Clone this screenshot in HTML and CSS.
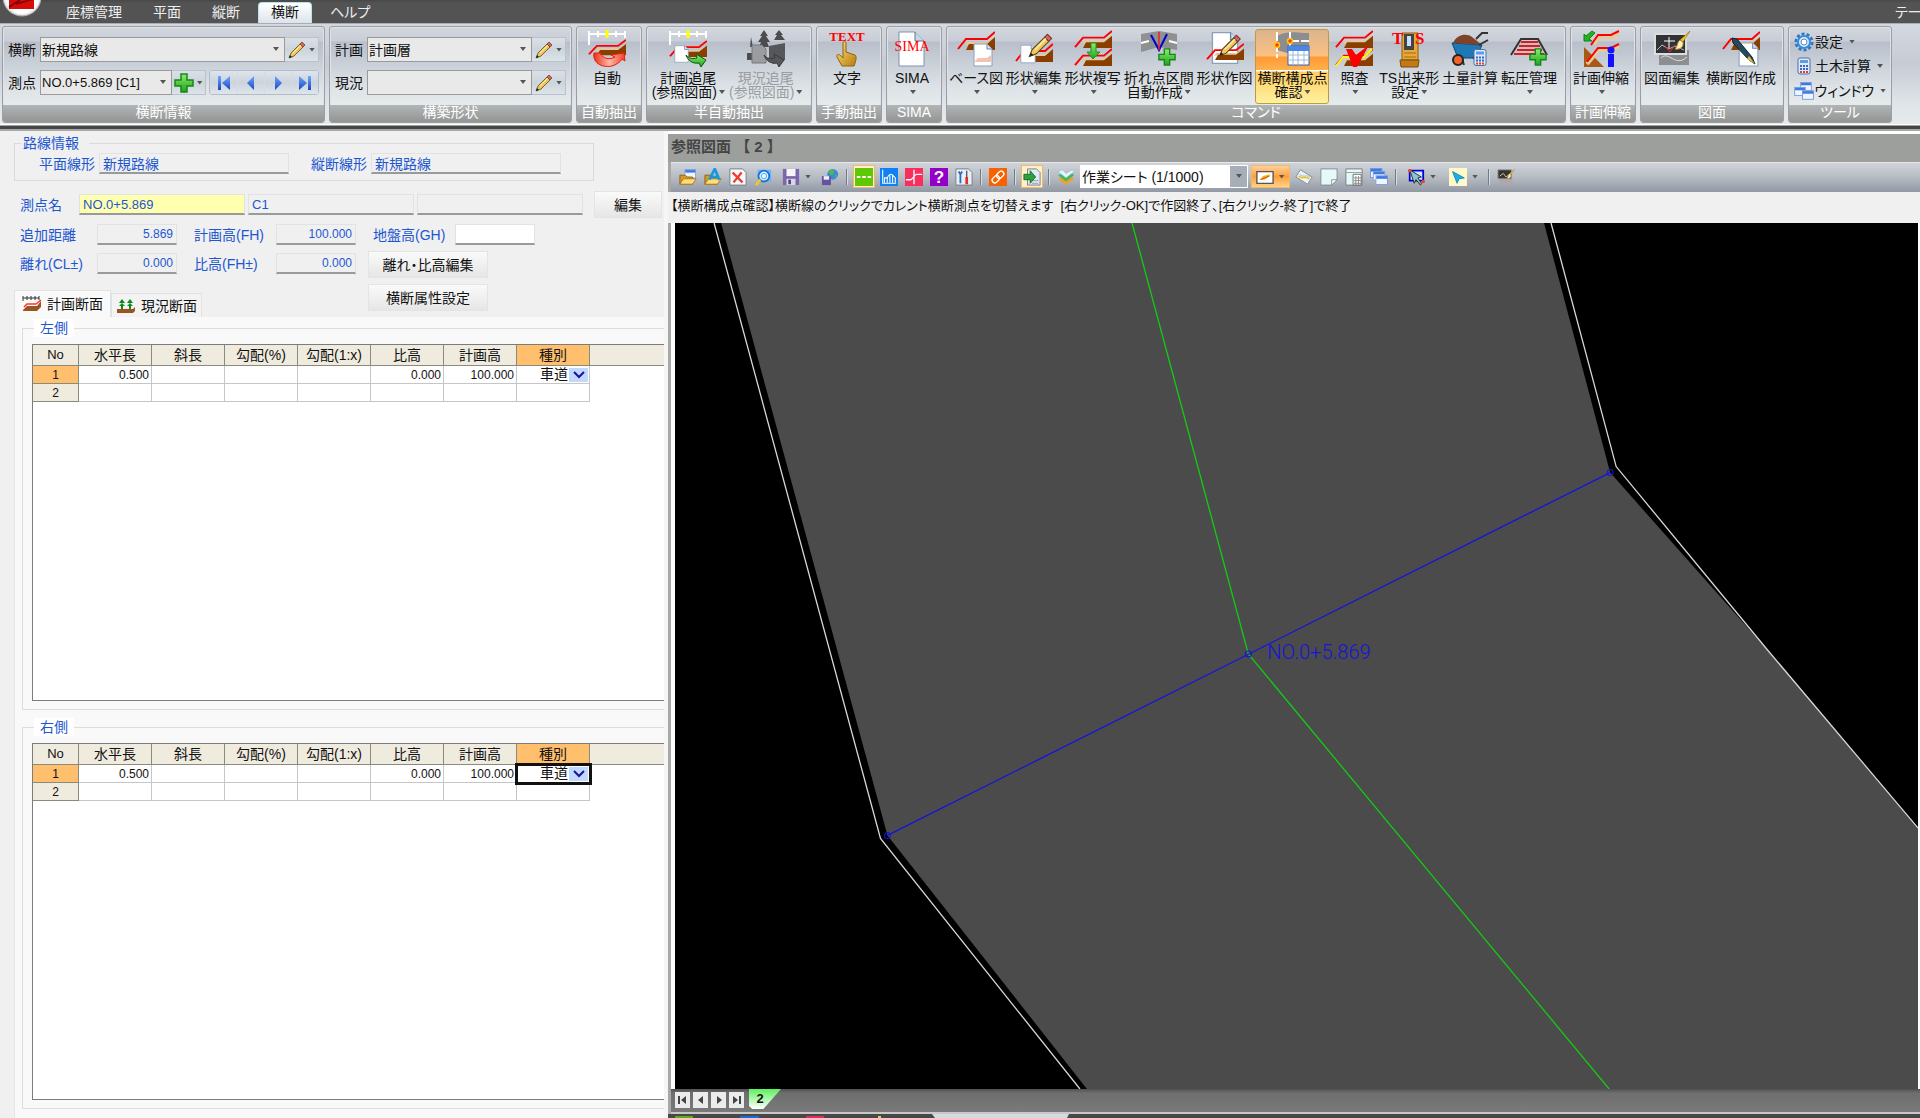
FILE: index.html
```html
<!DOCTYPE html>
<html lang="ja">
<head>
<meta charset="utf-8">
<title>横断</title>
<link rel="stylesheet" href="styles.css">
</head>
<body>
<svg class="defs" width="0" height="0" aria-hidden="true">
  <defs>
    <linearGradient id="gBlue" x1="0" y1="0" x2="0" y2="1"><stop offset="0" stop-color="#6fa8ff"/><stop offset="1" stop-color="#1646c8"/></linearGradient>
    <linearGradient id="gGreen" x1="0" y1="0" x2="0" y2="1"><stop offset="0" stop-color="#8cf06a"/><stop offset="1" stop-color="#1ea01e"/></linearGradient>
    <linearGradient id="gGold" x1="0" y1="0" x2="1" y2="1"><stop offset="0" stop-color="#ffe27a"/><stop offset="1" stop-color="#b87a10"/></linearGradient>
    <linearGradient id="gRed" x1="0" y1="0" x2="1" y2="0"><stop offset="0" stop-color="#e83018"/><stop offset=".5" stop-color="#ffb8a4"/><stop offset="1" stop-color="#f04028"/></linearGradient>
  </defs>
  <symbol id="prof" viewBox="0 0 38 20" preserveAspectRatio="none">
    <path d="M4 19 10 11H30L38 6V19H12V14H8Z" fill="#e3c99b"/>
    <path d="M9 19 12 13H30L38 6V19Z" fill="#8a3f00"/>
    <path d="M1 18 9 8H30L38 1" fill="none" stroke="#f00" stroke-width="2"/>
  </symbol>
  <symbol id="scale" viewBox="0 0 38 16">
    <path d="M1 1V15M1 4H37M10 1V7M28 1V7M37 1V8" stroke="#fff" stroke-width="2" fill="none"/>
    <path d="M19 0V8" stroke="#ff0" stroke-width="3"/>
  </symbol>
  <symbol id="page" viewBox="0 0 20 24">
    <path d="M1 1H14L19 6V23H1Z" fill="#fff" stroke="#8ba0bd"/><path d="M14 1V6H19" fill="#cfe0f2" stroke="#6f87a8"/>
  </symbol>
  <symbol id="pencil" viewBox="0 0 18 18">
    <path d="M1 17 3 12 12 3 15 6 6 15Z" fill="#f0c860" stroke="#5b4518" stroke-width=".8"/><path d="M12 3 14 1 17 4 15 6Z" fill="#d8685c" stroke="#7c3530" stroke-width=".8"/><path d="M1 17 2 14 4 16Z" fill="#222"/><path d="M5 12 13 4" stroke="#fff0b0" stroke-width="1"/>
  </symbol>
  <symbol id="plus" viewBox="0 0 20 20">
    <path d="M7 1H13V7H19V13H13V19H7V13H1V7H7Z" fill="url(#gGreen)" stroke="#17861b" stroke-width="1.5"/>
  </symbol>
  <symbol id="calc" viewBox="0 0 14 18">
    <rect x="1" y="1" width="12" height="16" rx="2" fill="#dfe9f8" stroke="#4a70a8"/><rect x="3" y="3" width="8" height="3" fill="#5e9be6"/>
    <path d="M3 9H5M6 9H8M9 9H11M3 12H5M6 12H8M9 12H11" stroke="#3568c8" stroke-width="2"/><path d="M3 15H5M6 15H8M9 15H11" stroke="#e04030" stroke-width="2"/>
  </symbol>
  <symbol id="folder" viewBox="0 0 20 20">
    <path d="M1 18V8H7L9 10H15V18Z" fill="#d49a28" stroke="#8c6210"/><path d="M1 18 5 12H19L15 18Z" fill="#ffdc7c" stroke="#a87818"/>
  </symbol>
  <symbol id="win" viewBox="0 0 14 11">
    <rect x=".5" y=".5" width="13" height="10" fill="#eef5ff" stroke="#6f95dc"/><rect x="1" y="1" width="12" height="3" fill="#3f78e0"/>
  </symbol>
  <symbol id="brush" viewBox="0 0 16 20">
    <path d="M15 0 8 11 5 9Z" fill="#f4c822" stroke="#8a6812" stroke-width=".6"/><path d="M8 11 5 9C2 11 3 15 0 18 5 19 9 16 8 11Z" fill="#fff2b8" stroke="#b08430"/>
  </symbol>
</svg>

<header class="menubar">
  <svg class="logo" width="44" height="23" viewBox="0 0 44 23"><circle cx="22" cy="-3" r="19" fill="#e8e8e8" stroke="#aaa"/><circle cx="22" cy="-3" r="17" fill="#fff"/><path d="M9 0H34V9H9Z" fill="#d80b0b"/><path d="M9 7 20 0M16 4 34 -1" stroke="#7c0000" stroke-width="1.5"/></svg>
  <nav class="menus">
    <button>座標管理</button><button>平面</button><button>縦断</button><button class="current">横断</button><button>ヘルプ</button>
  </nav>
  <button class="theme">テーマ</button>
</header>

<div class="ribbon">
  <section class="panel panel-info">
    <div class="fields">
      <div class="line"><label for="route">横断</label><span class="combo grow"><select id="route"><option>新規路線</option></select></span><button class="mini" aria-label="編集"><svg width="18" height="18"><use href="#pencil"/></svg><i class="caret"></i></button></div>
      <div class="line"><label for="station">測点</label><span class="combo combo-station"><select id="station"><option>NO.0+5.869 [C1]</option></select></span><button class="mini" aria-label="追加"><svg width="20" height="20"><use href="#plus"/></svg><i class="caret"></i></button>
        <div class="steps">
          <button aria-label="先頭"><svg width="14" height="16"><path d="M1 1H4V15H1ZM13 1V15L5 8Z" fill="url(#gBlue)"/></svg></button>
          <button aria-label="前へ"><svg width="14" height="16"><path d="M10 1V15L3 8Z" fill="url(#gBlue)"/></svg></button>
          <button aria-label="次へ"><svg width="14" height="16"><path d="M4 1V15L11 8Z" fill="url(#gBlue)"/></svg></button>
          <button aria-label="最後"><svg width="14" height="16"><path d="M10 1H13V15H10ZM1 1V15L9 8Z" fill="url(#gBlue)"/></svg></button>
        </div>
      </div>
    </div>
    <h2>横断情報</h2>
  </section>

  <section class="panel panel-shape">
    <div class="fields">
      <div class="line"><label for="plan">計画</label><span class="combo grow"><select id="plan"><option>計画層</option></select></span><button class="mini" aria-label="計画編集"><svg width="18" height="18"><use href="#pencil"/></svg><i class="caret"></i></button></div>
      <div class="line"><label for="actual">現況</label><span class="combo grow"><select id="actual"><option></option></select></span><button class="mini" aria-label="現況編集"><svg width="18" height="18"><use href="#pencil"/></svg><i class="caret"></i></button></div>
    </div>
    <h2>構築形状</h2>
  </section>

  <section class="panel panel-small">
    <div class="tools">
      <button class="tool"><svg viewBox="0 0 38 38"><use href="#scale" width="38" height="16"/><use href="#prof" y="9" width="38" height="17"/><path d="M6 23C4 34 16 38 24 36 30 34 33 31 34 29L37 31 36 23 23 25 27 27C22 30 15 29 12 23Z" fill="url(#gRed)" stroke="#e81a0a"/></svg><span>自動</span></button>
    </div>
    <h2>自動抽出</h2>
  </section>

  <section class="panel panel-semi">
    <div class="tools">
      <button class="tool"><svg viewBox="0 0 38 38"><use href="#scale" width="38" height="16"/><use href="#prof" y="10" width="38" height="18"/><use href="#page" x="5" y="15" width="15" height="18"/><path d="M17 25C20 29 24 29 28 28L27 24 37 30 32 37 30 33C24 34 19 31 17 25Z" fill="url(#gGreen)" stroke="#0c5a12"/></svg><span>計画追尾<br>(参照図面)<i class="caret"></i></span></button>
      <button class="tool" disabled><svg viewBox="0 0 38 38"><path d="M17 0 21 6H19L23 12H20L22 17H12L14 12H11L15 6H13ZM32 0 36 5H34L38 10H27L30 5H28ZM4 7 6 17H3Z" fill="#4a4c50"/><path d="M22 16 38 13V30L26 34 22 28Z" fill="#55575a"/><path d="M0 23H6V30H0Z" fill="#4a4c50"/><path d="M5 15H15L19 19V33H5Z" fill="#9b9c9f" stroke="#77797c"/><path d="M17 25C20 29 24 29 28 28L27 24 37 30 32 37 30 33C24 34 19 31 17 25Z" fill="#55575a" stroke="#3a3b3d"/></svg><span>現況追尾<br>(参照図面)<i class="caret"></i></span></button>
    </div>
    <h2>半自動抽出</h2>
  </section>

  <section class="panel panel-small">
    <div class="tools">
      <button class="tool"><svg viewBox="0 0 38 38"><text x="19" y="11" text-anchor="middle" class="ico-serif">TEXT</text><path d="M15 13C15 11 18 11 18 13V22L27 25C29 26 28 31 26 36H14L9 27C8 24 11 23 15 28Z" fill="url(#gGold)" stroke="#8c6410"/></svg><span>文字</span></button>
    </div>
    <h2>手動抽出</h2>
  </section>

  <section class="panel panel-sima">
    <div class="tools">
      <button class="tool"><svg viewBox="0 0 38 38"><path d="M6 2H22L31 11V36H6Z" fill="#fff" stroke="#7f93ad"/><path d="M22 2V11H31" fill="#c5d8ea" stroke="#5d7590"/><text x="19" y="21" text-anchor="middle" class="ico-serif ico-sima">SIMA</text></svg><span>SIMA<br><i class="caret"></i></span></button>
    </div>
    <h2>SIMA</h2>
  </section>

  <section class="panel panel-command">
    <div class="tools">
      <button class="tool"><svg viewBox="0 0 38 38"><use href="#prof" y="1" width="38" height="20"/><use href="#page" x="16" y="13" width="20" height="24"/><path d="M17 32 21 28H30L34 25V32Z" fill="#f2c3b4"/></svg><span>ベース図<br><i class="caret"></i></span></button>
      <button class="tool"><svg viewBox="0 0 38 38"><use href="#prof" y="13" width="38" height="20"/><use href="#page" x="5" y="14" width="16" height="20"/><use href="#pencil" x="13" y="3" width="25" height="25"/></svg><span>形状編集<br><i class="caret"></i></span></button>
      <button class="tool"><svg viewBox="0 0 38 38"><use href="#prof" width="38" height="19"/><use href="#prof" y="18" width="38" height="19"/><path d="M17 13H22V22H26L19 29 13 22H17Z" fill="url(#gGreen)" stroke="#1c9420"/></svg><span>形状複写<br><i class="caret"></i></span></button>
      <button class="tool"><svg viewBox="0 0 38 38"><path d="M1 4 19 1 37 4V20L19 17 1 22Z" fill="#8f9092"/><path d="M1 13 9 11M29 11 37 13" stroke="#fff" stroke-width="2"/><path d="M11 5 19 20 27 4" fill="none" stroke="#00c" stroke-width="2"/><path d="M19 2V20" stroke="#e22" stroke-width="1.5"/><use href="#plus" x="18" y="18" width="18" height="18"/></svg><span>折れ点区間<br>自動作成<i class="caret"></i></span></button>
      <button class="tool"><svg viewBox="0 0 38 38"><use href="#page" x="5" y="1" width="28" height="34"/><use href="#prof" y="13" width="38" height="18"/><use href="#pencil" x="12" y="4" width="24" height="23"/></svg><span>形状作図</span></button>
      <button class="tool active"><svg viewBox="0 0 38 38"><path d="M4 6C14 0 24 3 36 3V18C26 17 20 16 14 23L4 20Z" fill="#8b8d90"/><path d="M4 2V28M17 2V18M17 11H36" stroke="#fff" stroke-width="2" stroke-dasharray="9 2"/><circle cx="4" cy="15" r="2.5" fill="#f33" stroke="#fc0" stroke-width="1.5"/><circle cx="17" cy="11" r="2.5" fill="#f33" stroke="#fc0" stroke-width="1.5"/><rect x="15" y="16" width="21" height="19" fill="#fff" stroke="#2c62c4"/><rect x="15" y="16" width="21" height="5" fill="#4a86e8"/><path d="M15 25H36M15 30H36M20 21V35M25 21V35M31 21V35" stroke="#9db8dc"/></svg><span>横断構成点<br>確認<i class="caret"></i></span></button>
      <button class="tool"><svg viewBox="0 0 38 38"><use href="#prof" width="38" height="19"/><use href="#prof" y="18" width="38" height="19"/><path d="M1 36 8 27H29L37 19" fill="none" stroke="#ff0" stroke-width="2"/><path d="M11 19H17L21 25 34 15 22 37H18Z" fill="#f00"/></svg><span>照査<br><i class="caret"></i></span></button>
      <button class="tool"><svg viewBox="0 0 38 38"><path d="M12 3H28V30H12Z" fill="#e8a838" stroke="#8a5a10"/><path d="M14 4H24V20H14Z" fill="#444"/><path d="M17 6H21V16H17Z" fill="#c8e0ff"/><path d="M14 23H26M14 27H26" stroke="#a86a10"/><path d="M10 30H29L28 37H11Z" fill="#c07a18" stroke="#7c4c08"/><text x="2" y="14" class="ico-serif ico-ts">T</text><text x="25" y="14" class="ico-serif ico-ts">S</text></svg><span>TS出来形<br>設定<i class="caret"></i></span></button>
      <button class="tool"><svg viewBox="0 0 38 38"><path d="M1 13 7 28H25L31 15Z" fill="#1d78b4" stroke="#0d4470"/><path d="M2 13C6 4 16 3 21 7L31 15Z" fill="#80432a"/><path d="M25 9 31 3H37M28 15 37 10M10 26 13 35M22 27 28 34" fill="none" stroke="#333" stroke-width="2"/><circle cx="7" cy="30" r="5" fill="#f2632a" stroke="#222" stroke-width="2"/><use href="#calc" x="22" y="18" width="14" height="19"/></svg><span>土量計算</span></button>
      <button class="tool"><svg viewBox="0 0 38 38"><path d="M1 25 11 9H28L37 25" fill="none" stroke="#333" stroke-width="2"/><path d="M11 12H28M9 16H30M7 20H32M4 24H34" stroke="#e31818" stroke-width="2"/><use href="#plus" x="19" y="18" width="18" height="18"/></svg><span>転圧管理<br><i class="caret"></i></span></button>
    </div>
    <h2>コマンド</h2>
  </section>

  <section class="panel panel-small">
    <div class="tools">
      <button class="tool"><svg viewBox="0 0 38 38"><path d="M2 17 22 37H2Z" fill="#a85a14"/><path d="M12 14 18 7H30L37 4M5 34 17 20H30L37 16" fill="none" stroke="#e3c99b" stroke-width="4"/><path d="M9 15 16 5H29L37 1M5 32 16 18H29L37 14" fill="none" stroke="#f00" stroke-width="2"/><path d="M2 11V4L4 6 10 1 13 3 7 9 10 11Z" fill="#22b422" stroke="#128018"/><path d="M26 24H32V37H26Z" fill="#11f"/><circle cx="29" cy="20" r="3.5" fill="#11f"/></svg><span>計画伸縮<br><i class="caret"></i></span></button>
    </div>
    <h2>計画伸縮</h2>
  </section>

  <section class="panel panel-draw">
    <div class="tools">
      <button class="tool"><svg viewBox="0 0 38 38"><path d="M6 20H36V35H6Z" fill="#8c8e92"/><path d="M8 28C16 20 22 38 34 27" fill="none" stroke="#ddd"/><rect x="2" y="4" width="31" height="20" fill="#303236" stroke="#ddd" stroke-width="2"/><path d="M16 7V18M11 11H22" stroke="#fff"/><path d="M4 20 9 15 16 19 22 16 31 20" fill="none" stroke="#bbb"/><path d="M12 16 17 22 22 15" fill="none" stroke="#e22"/><use href="#brush" x="22" y="0" width="16" height="22"/></svg><span>図面編集</span></button>
      <button class="tool"><svg viewBox="0 0 38 38"><use href="#prof" y="1" width="38" height="20"/><use href="#page" x="16" y="12" width="21" height="25"/><path d="M10 8 15 9 30 27 33 34 27 30 11 13Z" fill="#244a5c" stroke="#12242e"/><path d="M27 26 33 34 25 29Z" fill="#e4c040"/></svg><span>横断図作成</span></button>
    </div>
    <h2>図面</h2>
  </section>

  <section class="panel panel-misc">
    <div class="list">
      <button><svg width="20" height="20" viewBox="0 0 20 20"><circle cx="10" cy="10" r="8" fill="none" stroke="#2f78c4" stroke-width="3" stroke-dasharray="3 2"/><circle cx="10" cy="10" r="6" fill="#d9ecff" stroke="#3a8be0" stroke-width="2"/><circle cx="10" cy="10" r="3" fill="#fff" stroke="#5a8cc0"/></svg>設定<i class="caret"></i></button>
      <button><svg width="20" height="18"><use href="#calc" x="3" width="14" height="18"/></svg>土木計算<i class="caret"></i></button>
      <button><svg width="20" height="18"><use href="#win" x="6" width="12" height="9"/><use href="#win" y="5" width="12" height="9"/><use href="#win" x="8" y="8" width="12" height="10"/></svg>ウィンドウ<i class="caret"></i></button>
    </div>
    <h2>ツール</h2>
  </section>
</div>

<main class="work">
  <section class="side">
    <fieldset class="route">
      <legend>路線情報</legend>
      <label for="hline">平面線形</label><input id="hline" value="新規路線" readonly>
      <label for="vline">縦断線形</label><input id="vline" value="新規路線" readonly>
    </fieldset>
    <div class="row row-name">
      <label for="name">測点名</label><input id="name" class="key" value="NO.0+5.869"><input value="C1" aria-label="測点名2" readonly><input value="" aria-label="測点名3" readonly>
      <button class="push">編集</button>
    </div>
    <div class="row row-values">
      <label for="dist">追加距離</label><input id="dist" class="num" value="5.869" readonly>
      <label for="fh">計画高(FH)</label><input id="fh" class="num" value="100.000" readonly>
      <label for="gh">地盤高(GH)</label><input id="gh" class="num open" value="">
    </div>
    <div class="lower">
      <div class="lower-left">
        <div class="row row-values">
          <label for="cl">離れ(CL±)</label><input id="cl" class="num" value="0.000" readonly>
          <label for="hd">比高(FH±)</label><input id="hd" class="num" value="0.000" readonly>
        </div>
        <div class="tabs" role="tablist">
          <button role="tab" class="on"><svg width="20" height="18" viewBox="0 0 20 18"><path d="M1 1V6M1 3H17M5 1V5M9 1V5M13 1V5M17 1V5" stroke="#333" fill="none"/><path d="M1 15 5 11H15L19 6V12L15 16H1Z" fill="#9a5420"/><path d="M2 12 5 9H14L19 5" stroke="#f33" fill="none" stroke-width="1.5"/></svg>計画断面</button>
          <button role="tab"><svg width="20" height="18" viewBox="0 0 20 18"><path d="M6 2 9 6H3ZM14 2 17 6H11ZM6 6 9 9H3ZM14 6 17 9H11ZM5 8H7V12H5ZM13 8H15V12H13Z" fill="#0a8a1a"/><path d="M1 12H17L19 10V14L17 16H1Z" fill="#9a5420"/></svg>現況断面</button>
        </div>
      </div>
      <div class="lower-buttons"><button class="push">離れ・比高編集</button><button class="push">横断属性設定</button></div>
    </div>
    <div class="tabpage">
      <fieldset class="group">
        <legend>左側</legend>
        <div class="sheet">
          <table>
            <thead><tr><th class="c-no">No</th><th>水平長</th><th>斜長</th><th>勾配(%)</th><th>勾配(1:x)</th><th>比高</th><th>計画高</th><th class="hot">種別</th><th class="rest"></th></tr></thead>
            <tbody>
              <tr><th class="hot">1</th><td>0.500</td><td></td><td></td><td></td><td>0.000</td><td>100.000</td><td class="kind"><span><select aria-label="種別"><option>車道</option></select><svg width="19" height="14" viewBox="0 0 19 14"><path d="M5 4 10 9 15 4" fill="none" stroke="#14149a" stroke-width="2"/></svg></span></td><td class="rest"></td></tr>
              <tr><th>2</th><td></td><td></td><td></td><td></td><td></td><td></td><td></td><td class="rest"></td></tr>
            </tbody>
          </table>
        </div>
      </fieldset>
      <fieldset class="group">
        <legend>右側</legend>
        <div class="sheet">
          <table>
            <thead><tr><th class="c-no">No</th><th>水平長</th><th>斜長</th><th>勾配(%)</th><th>勾配(1:x)</th><th>比高</th><th>計画高</th><th class="hot">種別</th><th class="rest"></th></tr></thead>
            <tbody>
              <tr><th class="hot">1</th><td>0.500</td><td></td><td></td><td></td><td>0.000</td><td>100.000</td><td class="kind picked"><span><select aria-label="種別"><option>車道</option></select><svg width="19" height="14" viewBox="0 0 19 14"><path d="M5 4 10 9 15 4" fill="none" stroke="#14149a" stroke-width="2"/></svg></span></td><td class="rest"></td></tr>
              <tr><th>2</th><td></td><td></td><td></td><td></td><td></td><td></td><td></td><td class="rest"></td></tr>
            </tbody>
          </table>
        </div>
      </fieldset>
    </div>
  </section>

  <section class="viewer">
    <h1>参照図面 【 2 】</h1>
    <div class="toolbar">
      <button aria-label="開く"><svg viewBox="0 0 20 20"><use href="#win" x="6" y="1" width="13" height="11"/><use href="#folder" width="20" height="20"/></svg></button>
      <button aria-label="追加読込"><svg viewBox="0 0 20 20"><use href="#folder" width="20" height="20"/><path d="M6 13 12 1 17 13M8 10H15" fill="none" stroke="#1598dc" stroke-width="3"/></svg></button>
      <button aria-label="閉じる"><svg viewBox="0 0 20 20"><path d="M1 1H15L19 5V19H1Z" fill="#f4f8ff" stroke="#777"/><path d="M4 5 15 16M14 5 5 16" stroke="#ee3b22" stroke-width="2.5"/></svg></button>
      <button aria-label="検索"><svg viewBox="0 0 20 20"><path d="M4 2H19V15H4Z" fill="#6ab4f4"/><circle cx="11" cy="9" r="6" fill="#e4f4ff" stroke="#1470dc" stroke-width="2"/><circle cx="11" cy="9" r="3" fill="none" stroke="#4aa0ec"/><path d="M7 13 2 19" stroke="#e8cc20" stroke-width="3"/></svg></button>
      <button aria-label="保存" class="with-caret"><svg viewBox="0 0 20 20"><path d="M1 1H19V19H1Z" fill="#7a68aa"/><path d="M5 1H15V9H5Z" fill="#f4f4fa"/><path d="M5 12H15V19H5Z" fill="#d8d8e4"/><path d="M7 13H10V18H7Z" fill="#554680"/></svg><i class="caret"></i></button>
      <button aria-label="Web保存"><svg viewBox="0 0 20 20"><circle cx="13" cy="7" r="6" fill="#3c88dc"/><path d="M8 4C12 0 16 3 14 6 12 9 10 8 8 4ZM15 8 18 7 16 12Z" fill="#53b848"/><path d="M1 9H11V19H1Z" fill="#6453a0"/><path d="M3 9H9V13H3Z" fill="#eee"/></svg></button>
      <i class="sep"></i>
      <button aria-label="線形" class="lit"><svg viewBox="0 0 20 20"><path d="M0 0H20V20H0Z" fill="#5ec800"/><path d="M2 10H18" stroke="#fff" stroke-width="2" stroke-dasharray="4 2"/></svg></button>
      <button aria-label="縦断図"><svg viewBox="0 0 20 20"><path d="M0 0H20V20H0Z" fill="#1080f4"/><path d="M3 2V17H18M5 16V11H8V16M8 12C9 7 12 6 14 8L17 11V16M11 8V16M14 8V16" fill="none" stroke="#fff" stroke-width="1.2"/></svg></button>
      <button aria-label="横断図"><svg viewBox="0 0 20 20"><path d="M0 0H20V20H0Z" fill="#f92e5c"/><path d="M10 2V18M1 13H6C9 13 10 7 13 7H19" fill="none" stroke="#fff" stroke-width="1.5"/></svg></button>
      <button aria-label="ヘルプ"><svg viewBox="0 0 20 20"><path d="M0 0H20V20H0Z" fill="#9400c8"/><text x="10" y="17" text-anchor="middle" class="ico-q">?</text></svg></button>
      <button aria-label="設定"><svg viewBox="0 0 20 20"><path d="M1 1H15L19 5V19H1Z" fill="#e4f0fc" stroke="#777"/><path d="M6 6V17M4 4 6 7 8 4" stroke="#3a64b4" stroke-width="2" fill="none"/><path d="M13 3V10" stroke="#555" stroke-width="1.5"/><path d="M13 10V18" stroke="#e23020" stroke-width="3"/></svg></button>
      <i class="sep"></i>
      <button aria-label="リンク"><svg viewBox="0 0 20 20"><path d="M0 0H20V20H0Z" fill="#f86000"/><g fill="none" stroke="#fff" stroke-width="1.5" transform="rotate(-45 10 10)"><rect x="2" y="7" width="9" height="6" rx="3"/><rect x="9" y="7" width="9" height="6" rx="3"/></g></svg></button>
      <i class="sep"></i>
      <button aria-label="取込" class="lit"><svg viewBox="0 0 20 20"><path d="M5 1H15L19 5V19H5Z" fill="#dfeaf6" stroke="#70788a"/><path d="M10 14H17M10 17H17" stroke="#99a"/><path d="M1 7H8V3L14 10 8 17V13H1Z" fill="#2ea03c" stroke="#146c22"/></svg></button>
      <i class="sep"></i>
      <button aria-label="レイヤ"><svg viewBox="0 0 20 20"><path d="M1 12 6 10 10 14 17 10 19 12 10 19Z" fill="#f0a030"/><path d="M1 8 6 6 10 10 17 6 19 8 10 15Z" fill="#46b858"/><path d="M1 4 6 2 10 6 17 2 19 4 10 11Z" fill="#e4f4ff" stroke="#7aa8d0" stroke-width=".5"/></svg></button>
      <span class="combo combo-sheet"><select aria-label="シート"><option>作業シート (1/1000)</option></select></span>
      <button aria-label="画像" class="lit orange with-caret"><svg viewBox="0 0 20 20"><path d="M1 4H19V17H1Z" fill="#fff" stroke="#555" stroke-width="1.5"/><path d="M4 13 8 9 16 7 14 10 9 13Z" fill="#f0b000"/><path d="M5 13 15 9" stroke="#c44"/></svg><i class="caret"></i></button>
      <button aria-label="画像回転"><svg viewBox="0 0 20 20"><path d="M6 2 19 10 14 18 1 10Z" fill="#eef2f4" stroke="#888"/><path d="M4 9C9 13 11 8 16 12" stroke="#f0c020" stroke-width="2" fill="none"/><path d="M5 7C10 11 12 7 17 10" stroke="#80c8e8" fill="none"/></svg></button>
      <button aria-label="用紙"><svg viewBox="0 0 20 20"><path d="M1 1H19V13L13 19H1Z" fill="#e2fafa" stroke="#888"/><path d="M13 19V13H19Z" fill="#fff" stroke="#888"/></svg></button>
      <button aria-label="表"><svg viewBox="0 0 20 20"><path d="M1 1H19V19H1Z" fill="#e2fafa" stroke="#777"/><path d="M1 5H19" stroke="#999"/><path d="M9 7H18V19H9Z" fill="#fff" stroke="#666"/><path d="M10 11H18M10 14H18M10 17H18M12 9V19M15 9V19" stroke="#888"/></svg></button>
      <button aria-label="重ねて表示"><svg viewBox="0 0 20 20"><use href="#win" width="14" height="11"/><use href="#win" x="3" y="3" width="14" height="11"/><use href="#win" x="6" y="8" width="14" height="11"/></svg></button>
      <i class="sep"></i>
      <button aria-label="選択" class="with-caret"><svg viewBox="0 0 20 20"><path d="M3 3H18V14H3Z" fill="#cfe8ff" stroke="#00d" stroke-width="2"/><path d="M3 2 8 17 10 13 15 19 16 17 12 11 16 10Z" fill="#8cc4cc" stroke="#222"/><circle cx="3" cy="3" r="2" fill="#e42"/><circle cx="18" cy="15" r="2" fill="#e42"/></svg><i class="caret"></i></button>
      <button aria-label="矢印" class="with-caret"><svg viewBox="0 0 20 20"><path d="M0 0H20V20H0Z" fill="#fffbc8"/><path d="M4 4 17 11 11 12 9 17Z" fill="#16b0e8" stroke="#1484c0"/></svg><i class="caret"></i></button>
      <i class="sep"></i>
      <button aria-label="図面編集"><svg viewBox="0 0 20 20"><path d="M3 11H17V18H3Z" fill="#b0a8a8"/><path d="M1 2H16V12H1Z" fill="#333" stroke="#999"/><path d="M3 9 7 6 10 10 14 7" stroke="#dc9" fill="none"/><use href="#brush" x="11" y="1" width="9" height="12"/></svg></button>
    </div>
    <p class="message">【横断構成点確認】横断線のクリックでカレント横断測点を切替えます&nbsp; [右クリック-OK]で作図終了、[右クリック-終了]で終了</p>
    <div class="canvas">
      <svg viewBox="0 0 1243 864" preserveAspectRatio="xMinYMin slice">
        <path d="M46 0H867L933 249 1090 426 1243 608V864H411L212 611Z" fill="#4b4b4b"/>
        <g fill="none" stroke-width="1.3">
          <path d="M39 0 205 614 404 864M874 0 939 243 1090 426 1243 607" stroke="#d8d8d8"/>
          <path d="M456 0 572 430 932 864" stroke="#12cc12"/>
          <path d="M212 611 933 249" stroke="#1414dc"/>
        </g>
        <g fill="none" stroke="#1414dc"><circle cx="212" cy="611" r="3"/><circle cx="572" cy="430" r="3"/><circle cx="933" cy="249" r="3"/></g>
        <text x="591" y="435" class="cad">NO.0+5.869</text>
      </svg>
    </div>
    <footer class="pages">
      <button aria-label="先頭"><svg width="15" height="16"><path d="M3 4H5V12H3ZM11 4V12L6 8Z"/></svg></button>
      <button aria-label="前へ"><svg width="15" height="16"><path d="M10 4V12L5 8Z"/></svg></button>
      <button aria-label="次へ"><svg width="15" height="16"><path d="M6 4V12L11 8Z"/></svg></button>
      <button aria-label="最後"><svg width="15" height="16"><path d="M10 4H12V12H10ZM4 4V12L9 8Z"/></svg></button>
      <button class="leaf">2</button>
    </footer>
    <svg class="dock" height="4"><path d="M7 2H25V4H7Z" fill="#5fae10"/><path d="M72 2H91V4H72Z" fill="#1070d8"/><path d="M138 2H156V4H138Z" fill="#e03058"/><path d="M210 2H213V4H210Z" fill="#f0c860"/><path d="M264 0H401L399 4H267Z" fill="#d4dade"/></svg>
  </section>
</main>
</body>
</html>
```
FILE: styles.css
```css
* { box-sizing: border-box; }

body {
  margin: 0;
  height: 100vh;
  display: flex;
  flex-direction: column;
  overflow: hidden;
  background: #f0f0f0;
  color: #111;
  font: 14px/16px "Liberation Sans", "Noto Sans CJK JP", sans-serif;
  font-feature-settings: "palt";
}

button, input, select { font: inherit; color: inherit; font-feature-settings: inherit; }
button { border: 0; padding: 0; background: none; white-space: nowrap; }
.defs { position: absolute; }

.caret {
  display: inline-block;
  width: 6px;
  height: 4px;
  background: #555;
  clip-path: polygon(0 0, 100% 0, 50% 100%);
}

/* Menu bar */
.menubar {
  flex: none;
  display: flex;
  height: 23px;
  background: linear-gradient(#484848, #535353 3px);
  color: #eee;
}
.logo { margin-right: 9px; }
.menus { display: flex; gap: 5px; }
.menus button { padding: 0 13px; height: 23px; }
.menus .current {
  margin-top: 2px;
  height: 21px;
  color: #111;
  border: 1px solid #b4e4ea;
  border-bottom: 0;
  border-radius: 4px 4px 0 0;
  padding: 0 12px 2px;
  background: linear-gradient(#fff, #dde3ea);
}
.theme { margin-left: auto; width: 25px; overflow: hidden; text-align: left; }

/* Ribbon */
.ribbon {
  flex: none;
  display: flex;
  gap: 4px;
  height: 108px;
  padding: 2px 2px 8px;
  border-top: 1px solid #aab;
  background: linear-gradient(#d4d9e0, #c6cbd5 40px, #dfe5e9 80px, #e6ecec 100px, #fff 100px, #fff 101px, #464646 102px, #464646 105px, #a8a8a8 105px);
}
.panel {
  flex: none;
  display: flex;
  flex-direction: column;
  height: 97px;
  border: 1px solid #9b9fa4;
  border-radius: 3px;
  overflow: hidden;
  background: linear-gradient(#d3d8df, #c8cdd6 14px, #b9bfca 15px, #dce2e6 60px, #e6ecec 78px);
  box-shadow: inset 0 0 0 1px #dfe3e8;
}
.panel h2 {
  flex: none;
  margin: 0;
  height: 17px;
  font-size: 14px;
  line-height: 14px;
  font-weight: 400;
  text-align: center;
  color: #fff;
  background: linear-gradient(#b2b5b5, #939595);
}
.panel-info { width: 323px; }
.panel-shape { width: 243px; }
.panel-small { width: 66px; }
.panel-semi { width: 166px; }
.panel-sima { width: 56px; }
.panel-command { width: 620px; }
.panel-draw { width: 144px; }
.panel-misc { width: 104px; }

.fields { flex: 1; display: flex; flex-direction: column; gap: 8px; padding: 10px 5px 0; }
.line { display: flex; align-items: center; height: 25px; }
.line label { width: 32px; flex: none; }
.combo {
  position: relative;
  display: flex;
  height: 25px;
  border: 1px solid #9a9a9a;
  background: #e9e9e9;
}
.combo select {
  appearance: none;
  flex: 1;
  min-width: 0;
  border: 0;
  padding: 0 1px;
  background: none;
}
.combo::after {
  content: "";
  position: absolute;
  right: 5px;
  top: 9px;
  width: 6px;
  height: 4px;
  background: #555;
  clip-path: polygon(0 0, 100% 0, 50% 100%);
  pointer-events: none;
}
.grow { flex: 1; }
.combo-station { width: 132px; }
#station { font-size: 13px; }
.mini {
  width: 34px;
  height: 25px;
  display: flex;
  align-items: center;
  justify-content: space-evenly;
  border: 1px solid #b9c2cc;
  border-left: 0;
  background: linear-gradient(#dbe0e6, #ccd4dc 50%, #dde4e8);
}
.steps { margin-left: auto; display: flex; border: 1px solid #b3bcc8; border-radius: 3px; }
.steps button {
  width: 27px;
  height: 23px;
  display: grid;
  place-items: center;
  border-left: 1px solid #d3dae2;
  background: linear-gradient(#dfe5eb, #cbd3dc 50%, #dfe6ea);
}

.tools { flex: 1; display: flex; justify-content: center; padding: 2px 4px 1px 0; }
.tool {
  min-width: 44px;
  padding: 1px 0 0;
  display: flex;
  flex-direction: column;
  align-items: center;
  gap: 3px;
  line-height: 14px;
}
.panel-semi .tools { gap: 4px; }
.panel-command .tools { justify-content: space-between; padding: 2px 8px 1px 2px; }
.panel-draw .tools { gap: 6px; }
.tool svg { width: 38px; height: 38px; flex: none; }
.tool .caret { margin: 0 0 3px 2px; }
.tool:disabled { color: #9a9da1; }
.tool.active {
  padding: 0 1px;
  border: 1px solid #c29a3e;
  border-radius: 3px;
  background: linear-gradient(#dcb48c, #fbc182 26px, #ff9a35 27px, #ffb14c 40px, #fff 40px, #fff 41px, #ffcd60 42px, #fff2a0);
}
.ico-serif { font: 700 13px "Liberation Serif", serif; fill: #f00; }
.ico-sima { font-size: 14px; font-weight: 400; }
.ico-ts { font-size: 17px; }
.ico-q { font: 700 19px "Liberation Sans", sans-serif; fill: #fff; }

.list { flex: 1; display: flex; flex-direction: column; justify-content: space-evenly; padding: 1px 5px; }
.list button { display: flex; align-items: center; gap: 1px; height: 22px; }
.list .caret { margin-left: 5px; }

/* Work area */
.work { flex: 1; min-height: 0; display: grid; grid-template-columns: 664px 1fr; }

.side {
  min-height: 0;
  display: flex;
  flex-direction: column;
  padding-top: 4px;
  color: #1d57d0;
}
.side input {
  flex: none;
  height: 21px;
  border: 1px solid #e2e2e2;
  border-bottom: 2px solid #9a9a9a;
  padding: 0 3px;
  background: #f0f0f0;
  outline: 0;
}
.route {
  display: flex;
  align-items: center;
  margin: 0 0 0 14px;
  width: 580px;
  border: 1px solid #dadada;
  padding: 2px 0 6px 24px;
}
.route legend { margin-left: -18px; padding: 0 10px 0 2px; }
.route label { width: 60px; }
.route input { width: 190px; margin-right: 22px; }
.row { display: flex; align-items: center; padding-left: 20px; }
.row label { flex: none; }
.row-name { margin-top: 10px; gap: 3px; }
.row-name label { width: 56px; }
.row-name input { width: 166px; font-size: 13px; }
.row-name .push { width: 68px; margin-left: 8px; }
.side .key { background: #ffffb0; }
.row-values { margin-top: 6px; }
.row-values label { width: 77px; }
.row-values input { width: 80px; margin-right: 17px; }
.row-values input + label { width: 82px; }
.side .num { font-size: 12px; text-align: right; }
.side .open { background: #fff; }
.push {
  height: 27px;
  color: #111;
  border: 1px solid #e4e4e4;
  background: linear-gradient(#fafafa, #e6e6e6);
}
.lower { display: flex; margin-top: 6px; }
.lower-left { flex: none; width: 368px; display: flex; flex-direction: column; justify-content: space-between; }
.lower-left .row { margin-top: 2px; }
.lower-buttons { display: flex; flex-direction: column; gap: 6px; padding-bottom: 6px; }
.lower-buttons .push { width: 120px; }
.tabs { display: flex; align-items: flex-end; padding-left: 14px; color: #111; }
.tabs button {
  display: flex;
  align-items: center;
  gap: 5px;
  height: 24px;
  padding: 0 4px;
  border: 1px solid #e2e2e2;
  border-bottom: 0;
  background: #f3f3f3;
}
.tabs .on { height: 27px; padding: 0 7px; background: #f9f9f9; }
.tabpage {
  flex: 1;
  min-height: 0;
  margin-left: 14px;
  display: flex;
  flex-direction: column;
  gap: 8px;
  padding: 2px 0 9px 7px;
  border-left: 1px solid #e6e6e6;
  background: #f9f9f9;
}
.group {
  flex: 1;
  min-height: 0;
  min-width: 0;
  display: flex;
  margin: 0;
  border: 1px solid #dcdcdc;
  border-right: 0;
  padding: 7px 0 8px 9px;
}
.group legend { margin-left: 2px; padding: 1px 6px; background: #fff; }
.sheet {
  flex: 1;
  border: 1px solid #7c7c7c;
  border-right: 0;
  background: #fff;
  color: #111;
}
.sheet table { width: 100%; table-layout: fixed; border-collapse: separate; border-spacing: 0; }
.sheet th, .sheet td { padding: 0 2px; height: 18px; width: 73px; font-size: 12px; line-height: 16px; border: solid #c6c6c6; border-width: 0 1px 1px 0; }
.sheet td { text-align: right; }
.sheet th { font-weight: 400; background: #efebde; border-color: #8c8a7c; }
.sheet thead th { height: 21px; font-size: 14px; }
.sheet .c-no { width: 46px; font-size: 13px; }
.sheet .hot { background: #ffbf6c; }
.sheet .rest { width: auto; border-right: 0; }
.sheet td.rest { border: 0; }
.sheet .kind { padding: 0 1px 0 2px; }
.kind span { display: flex; align-items: center; height: 15px; }
.kind select {
  appearance: none;
  flex: 1;
  min-width: 0;
  height: 15px;
  padding: 0 1px;
  border: 0;
  background: none;
  font-size: 14px;
  line-height: 15px;
  text-align-last: right;
}
.kind svg { background: #c3d8ff; }
.picked { outline: 3px solid #111; outline-offset: -1px; }

/* Drawing viewer */
.viewer {
  min-width: 0;
  min-height: 0;
  display: flex;
  flex-direction: column;
  border-left: 4px solid #f6f6f6;
  background: #a8a8a8;
}
.viewer h1 {
  flex: none;
  margin: 0;
  height: 31px;
  padding-left: 3px;
  border-top: 3px solid #fff;
  font-size: 15px;
  line-height: 26px;
  font-weight: 700;
  font-feature-settings: normal;
  color: #454545;
  background: #9d9f9d;
}
.toolbar {
  flex: none;
  display: flex;
  align-items: center;
  gap: 3px;
  height: 30px;
  margin-left: 3px;
  padding: 0 0 2px 6px;
  border-top: 1px solid #e8e8e8;
  background: linear-gradient(#d0d4da, #b6bbc3 50%, #9299a4);
}
.toolbar button { min-width: 22px; height: 23px; flex: none; display: flex; align-items: center; justify-content: center; }
.toolbar button svg { width: 18px; height: 18px; }
.toolbar .with-caret { width: 39px; justify-content: space-evenly; }
.toolbar .lit { border: 1px solid #f0b868; background: #fff0c8; }
.toolbar .orange { background: linear-gradient(#ffd09a, #ff9f3c 50%, #ffd48a); }
.sep { flex: none; width: 2px; height: 16px; background: #747a84; border-right: 1px solid #d8dce2; margin: 0 2px; }
.combo-sheet { width: 168px; height: 23px; border-color: #fff; background: linear-gradient(90deg, #fff 149px, #a8aeb8 149px); }
.combo-sheet::after { top: 8px; }
.message {
  flex: none;
  margin: 0;
  height: 31px;
  padding-left: 3px;
  font-size: 13px;
  line-height: 27px;
  white-space: nowrap;
  background: #f0f0f0;
}
.canvas {
  flex: 1;
  min-height: 0;
  margin: 0 0 0 3px;
  border: solid #fff;
  border-width: 0 2px 0 4px;
  background: #000;
}
.canvas svg { display: block; width: 100%; height: 100%; }
.cad { font: 300 20px Roboto, sans-serif; fill: #1414dc; }
.pages {
  flex: none;
  display: flex;
  gap: 3px;
  height: 25px;
  margin-left: 3px;
  padding: 3px 0 0 4px;
  border-bottom: 2px solid #c8c8c8;
  background: linear-gradient(#505050, #6e6e6e 4px, #7a7a7a);
}
.pages button { width: 15px; height: 16px; background: #ececec; }
.pages svg { display: block; fill: #444; }
.pages .leaf {
  width: 32px;
  height: 20px;
  margin: -3px 0 0 2px;
  padding-right: 10px;
  font-weight: 700;
  font-size: 13px;
  background: linear-gradient(#5cf05c, #fff);
  clip-path: polygon(0 0, 100% 0, 45% 100%, 10% 100%, 0 85%);
}
.dock { flex: none; display: block; width: 100%; background: #484848; }
```
